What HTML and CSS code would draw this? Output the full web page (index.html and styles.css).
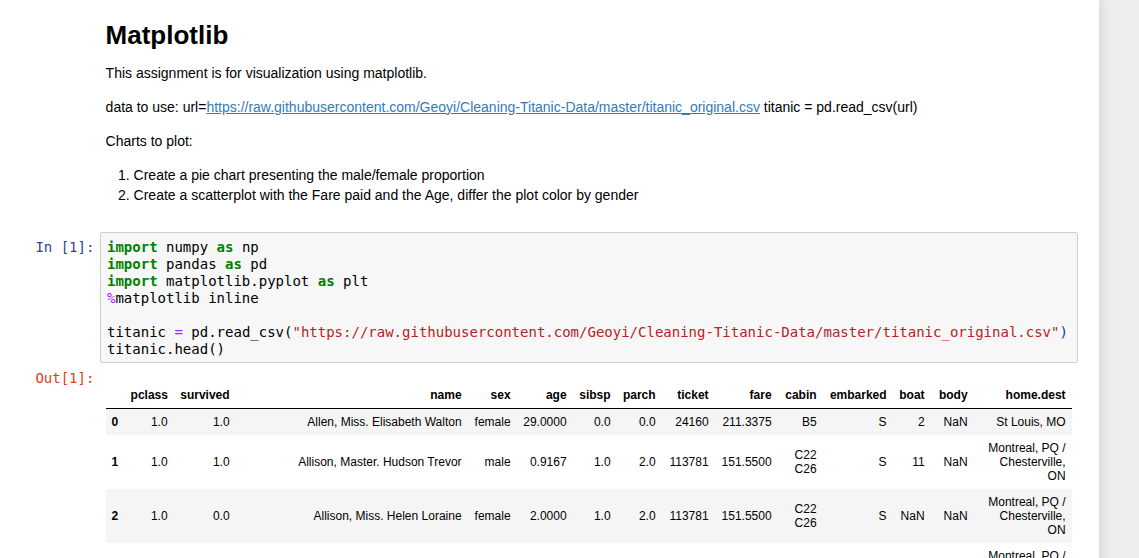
FILE: index.html
```html
<!DOCTYPE html>
<html lang="en">
<head>
<meta charset="utf-8">
<title>Matplotlib</title>
<link rel="stylesheet" href="styles.css">
</head>
<body>
<div class="page">
  <main class="notebook">
    <section class="cell text-cell">
      <div class="prompt"></div>
      <div class="rendered">
        <h1>Matplotlib</h1>
        <p>This assignment is for visualization using matplotlib.</p>
        <p>data to use: url=<a href="#">https://raw.githubusercontent.com/Geoyi/Cleaning-Titanic-Data/master/titanic_original.csv</a> titanic = pd.read_csv(url)</p>
        <p>Charts to plot:</p>
        <ol>
          <li>Create a pie chart presenting the male/female proportion</li>
          <li>Create a scatterplot with the Fare paid and the Age, differ the plot color by gender</li>
        </ol>
      </div>
    </section>

    <section class="cell code-cell">
      <div class="input">
        <div class="prompt in-prompt">In&nbsp;[1]:</div>
        <div class="input-area"><pre class="code"><span class="kw">import</span> numpy <span class="kw">as</span> np
<span class="kw">import</span> pandas <span class="kw">as</span> pd
<span class="kw">import</span> matplotlib.pyplot <span class="kw">as</span> plt
<span class="op">%</span>matplotlib inline

titanic <span class="op">=</span> pd.read_csv(<span class="str">"https://raw.githubusercontent.com/Geoyi/Cleaning-Titanic-Data/master/titanic_original.csv"</span><span class="bracket">)</span>
titanic.head()</pre></div>
      </div>
      <div class="output">
        <div class="prompt out-prompt">Out[1]:</div>
        <div class="output-sub">
          <table class="dataframe">
            <colgroup>
              <col class="c-idx"><col class="c-pclass"><col class="c-survived"><col class="c-name"><col class="c-sex"><col class="c-age"><col class="c-sibsp"><col class="c-parch"><col class="c-ticket"><col class="c-fare"><col class="c-cabin"><col class="c-embarked"><col class="c-boat"><col class="c-body"><col class="c-dest">
            </colgroup>
            <thead>
              <tr><th></th><th>pclass</th><th>survived</th><th>name</th><th>sex</th><th>age</th><th>sibsp</th><th>parch</th><th>ticket</th><th>fare</th><th>cabin</th><th>embarked</th><th>boat</th><th>body</th><th>home.dest</th></tr>
            </thead>
            <tbody>
              <tr><th>0</th><td>1.0</td><td>1.0</td><td>Allen, Miss. Elisabeth Walton</td><td>female</td><td>29.0000</td><td>0.0</td><td>0.0</td><td>24160</td><td>211.3375</td><td>B5</td><td>S</td><td>2</td><td>NaN</td><td>St Louis, MO</td></tr>
              <tr><th>1</th><td>1.0</td><td>1.0</td><td>Allison, Master. Hudson Trevor</td><td>male</td><td>0.9167</td><td>1.0</td><td>2.0</td><td>113781</td><td>151.5500</td><td>C22 C26</td><td>S</td><td>11</td><td>NaN</td><td>Montreal, PQ / Chesterville, ON</td></tr>
              <tr><th>2</th><td>1.0</td><td>0.0</td><td>Allison, Miss. Helen Loraine</td><td>female</td><td>2.0000</td><td>1.0</td><td>2.0</td><td>113781</td><td>151.5500</td><td>C22 C26</td><td>S</td><td>NaN</td><td>NaN</td><td>Montreal, PQ / Chesterville, ON</td></tr>
              <tr><th>3</th><td>1.0</td><td>0.0</td><td>Allison, Mr. Hudson Joshua Creighton</td><td>male</td><td>30.0000</td><td>1.0</td><td>2.0</td><td>113781</td><td>151.5500</td><td>C22 C26</td><td>S</td><td>NaN</td><td>135.0</td><td>Montreal, PQ / Chesterville, ON</td></tr>
              <tr><th>4</th><td>1.0</td><td>0.0</td><td>Allison, Mrs. Hudson J C (Bessie Waldo Daniels)</td><td>female</td><td>25.0000</td><td>1.0</td><td>2.0</td><td>113781</td><td>151.5500</td><td>C22 C26</td><td>S</td><td>NaN</td><td>NaN</td><td>Montreal, PQ / Chesterville, ON</td></tr>
            </tbody>
          </table>
        </div>
      </div>
    </section>
  </main>
  <div class="gutter"></div>
</div>
</body>
</html>
```

FILE: styles.css
```css
html, body {
  margin: 0;
  padding: 0;
}

body {
  background: #eeeeee;
  font-family: "Liberation Sans", Arial, sans-serif;
  font-size: 14px;
  line-height: 20px;
  color: #000;
}

.page {
  display: flex;
  min-height: 100vh;
}

.notebook {
  width: 1099px;
  flex: 0 0 1099px;
  background: #fff;
  box-shadow: 0 0 12px 1px rgba(87, 87, 87, 0.2);
  min-height: 100vh;
  box-sizing: border-box;
  padding-right: 21px;
}

.gutter {
  flex: 1;
}

.cell {
  display: block;
}

.text-cell {
  display: flex;
  padding-top: 20px;
}

.prompt {
  flex: 0 0 100px;
  width: 100px;
  box-sizing: border-box;
  padding: 7px 5.6px 0 0;
  text-align: right;
  font-family: "DejaVu Sans Mono", monospace;
  font-size: 14px;
  line-height: 17px;
  white-space: nowrap;
}

.in-prompt {
  color: #303f9f;
}

.out-prompt {
  color: #d84315;
}

.rendered {
  flex: 1;
  padding-left: 5.6px;
}

.rendered h1 {
  margin: 0;
  font-size: 26px;
  line-height: 31px;
  font-weight: bold;
}

.rendered p {
  margin: 11.5px 0 14px;
}

.rendered p + p {
  margin-top: 0;
}

.rendered a {
  color: #337ab7;
  text-decoration: underline;
}

.rendered ol {
  margin: 0;
  padding-left: 28px;
}

.code-cell {
  margin-top: 27.5px;
}

.input,
.output {
  display: flex;
}

.input-area {
  flex: 1;
  min-width: 0;
  background: #f7f7f7;
  border: 1px solid #cfcfcf;
  border-radius: 2px;
  padding: 6px 6px 4px;
}

.code {
  margin: 0;
  font-family: "DejaVu Sans Mono", monospace;
  font-size: 14px;
  line-height: 17px;
  color: #000;
  white-space: pre;
}

.kw {
  color: #008000;
  font-weight: bold;
}

.op {
  color: #aa22ff;
}

.str {
  color: #ba2121;
}

.bracket {
  color: #0b3d91;
}

.output-sub {
  flex: 1;
  min-width: 0;
  padding: 6px 5.6px;
}

.dataframe {
  margin-top: 13px;
  width: 966px;
  table-layout: fixed;
  border-collapse: collapse;
  border-spacing: 0;
  border: none;
  font-size: 12px;
  line-height: 14px;
  color: #000;
}

.dataframe th,
.dataframe td {
  padding: 6px;
  text-align: right;
  vertical-align: middle;
  border: none;
  white-space: normal;
}

.dataframe th {
  font-weight: bold;
}

.dataframe tbody th {
  text-align: left;
}

.dataframe thead th {
  border-bottom: 1px solid #000;
}

.dataframe tbody tr:nth-child(odd) {
  background: #f5f5f5;
}

.c-idx { width: 19px; }
.c-pclass { width: 49px; }
.c-survived { width: 62px; }
.c-name { width: 232px; }
.c-sex { width: 49px; }
.c-age { width: 56px; }
.c-sibsp { width: 44px; }
.c-parch { width: 45px; }
.c-ticket { width: 53px; }
.c-fare { width: 63px; }
.c-cabin { width: 45px; }
.c-embarked { width: 70px; }
.c-boat { width: 38px; }
.c-body { width: 43px; }
.c-dest { width: 98px; }
```
